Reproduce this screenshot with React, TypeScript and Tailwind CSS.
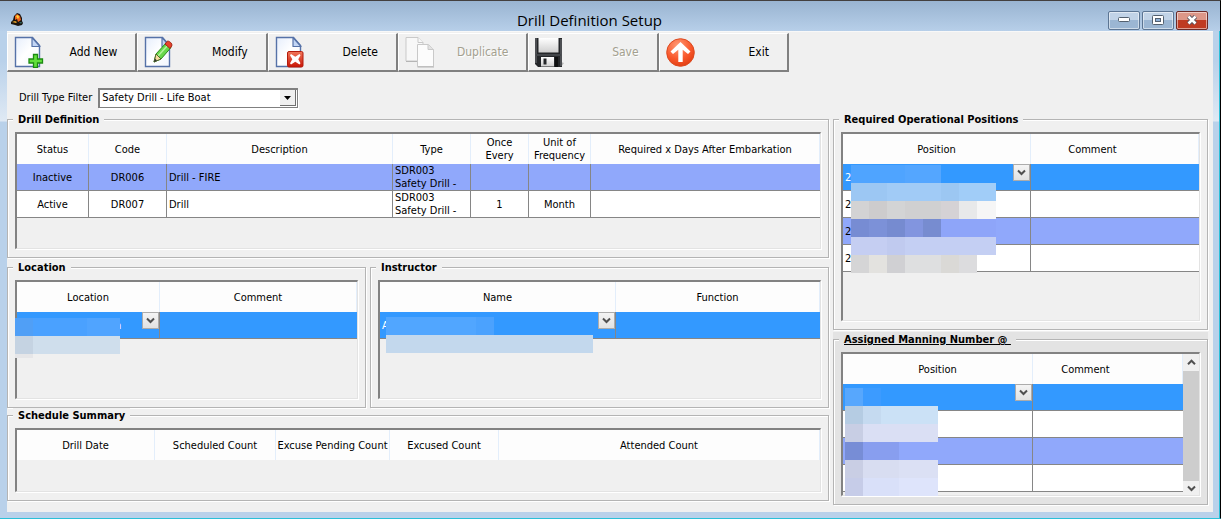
import { useState } from 'react';
import type { ReactNode } from 'react';
import clsx from 'clsx';

interface Column {
  title: string;
  width?: string;
  className?: string;
}

type RowTone = 'selected' | 'alt' | 'plain';

interface Row {
  tone: RowTone;
  cells: ReactNode[];
  align?: string[];
}

const rowTones: Record<RowTone, string> = {
  selected: 'bg-[#3399ff] text-white',
  alt: 'bg-[#90a8fb] text-black',
  plain: 'bg-white text-black',
};

/* ---------- icons ---------- */

function Page() {
  return (
    <>
      <path d="M1.5 1.5h17l7 8v21h-24z" fill="url(#paper)" stroke="#5672a8" strokeWidth="1.4" />
      <path d="M18 1.5l8 9h-8z" fill="#c3d6f5" stroke="#5672a8" strokeWidth="1.2" strokeLinejoin="round" />
    </>
  );
}

function IconDefs() {
  return (
    <svg width="0" height="0" className="absolute" aria-hidden="true">
      <defs>
        <linearGradient id="paper" x1="0" y1="0" x2="1" y2="1">
          <stop offset="0" stopColor="#e6eefc" />
          <stop offset="0.5" stopColor="#ffffff" />
          <stop offset="1" stopColor="#f1f6ff" />
        </linearGradient>
        <linearGradient id="red" x1="0" y1="0" x2="0" y2="1">
          <stop offset="0" stopColor="#f0775a" />
          <stop offset="1" stopColor="#c81405" />
        </linearGradient>
        <radialGradient id="orange" cx="0.4" cy="0.25" r="0.8">
          <stop offset="0" stopColor="#ff9c78" />
          <stop offset="0.6" stopColor="#f9582c" />
          <stop offset="1" stopColor="#e03c10" />
        </radialGradient>
        <linearGradient id="metal" x1="0" y1="0" x2="0" y2="1">
          <stop offset="0" stopColor="#ffffff" />
          <stop offset="1" stopColor="#cfcfcf" />
        </linearGradient>
      </defs>
    </svg>
  );
}

function AddIcon() {
  return (
    <svg width="30" height="32" viewBox="0 0 30 32" aria-hidden="true">
      <Page />
      <path d="M19.500 18.500h4v4.500h5v4h-5v4.500h-4V27H15v-4h4.500z" fill="#62e03c" stroke="#1c8a12" strokeWidth="1.300" />
    </svg>
  );
}

function ModifyIcon() {
  return (
    <svg width="30" height="32" viewBox="0 0 30 32" aria-hidden="true">
      <Page />
      <path d="M10 26l2-8L22 7l5 4.500L17 23z" fill="#67d84b" stroke="#2b8a1c" />
      <path d="M14 20L24 9" stroke="#b4f29c" strokeWidth="1.500" />
      <path d="M10 26l2-8 5 5z" fill="#f6dda0" stroke="#52682a" />
      <path d="M10 26l1-3.500 2 2z" fill="#333" />
      <path d="M21 8l2-2.500c1.500-1.500 6 2 4.700 4.500L26 12.500z" fill="#e5432c" stroke="#a32413" />
    </svg>
  );
}

function DeleteIcon() {
  return (
    <svg width="30" height="32" viewBox="0 0 30 32" aria-hidden="true">
      <Page />
      <rect x="12.500" y="15.500" width="15.500" height="15.500" rx="1.500" fill="url(#red)" stroke="#b31b0c" />
      <path d="M16 18l4.300 2.800L24.500 18l1 1.200-2.200 4 2.200 4-1 1.300-4.200-2.700-4.300 2.700-1-1.300 2.300-4-2.300-4z" fill="#fff" />
    </svg>
  );
}

function DuplicateIcon() {
  return (
    <svg width="30" height="32" viewBox="0 0 30 32" aria-hidden="true">
      <g stroke="#c9c9c9" fill="#f8f8f8" strokeLinejoin="round">
        <path d="M1 1.500h12l5 5V25H1z" />
        <path d="M13 1.500v5h5" />
        <path d="M12.500 8.500h11l5 5v17h-16z" fill="#fcfcfc" />
        <path d="M23 8.500v5h5.500" fill="#e2e2e2" />
      </g>
      <path d="M1 25.500h11M12.500 31h16.500" stroke="#b5b5b5" />
    </svg>
  );
}

function SaveIcon() {
  return (
    <svg width="30" height="32" viewBox="0 0 30 32" aria-hidden="true">
      <path d="M26 26l3 1-3 4z" fill="#b8b8b8" />
      <path d="M0 2h27v29H3l-3-3z" fill="#25272a" />
      <path d="M1 2v25M26 3v27" stroke="#77797c" />
      <path d="M3.500 2h20v14.500h-20z" fill="url(#metal)" />
      <path d="M1 18h25v2H1z" fill="#43464a" />
      <path d="M6 21h13v9.500H6z" fill="url(#metal)" />
      <path d="M8.500 22.500h3v6h-3z" fill="#25272a" />
      <path d="M20 21h3v10h-3z" fill="#0e0f10" />
    </svg>
  );
}

function ExitIcon() {
  return (
    <svg width="30" height="32" viewBox="0 0 30 32" aria-hidden="true">
      <circle cx="14.500" cy="16.500" r="13.800" fill="url(#orange)" stroke="#dc4a20" />
      <path d="M14.500 6l10 9.500-2.500 2.500-5.300-4.200V26h-4.400V13.800L7 18l-2.500-2.500z" fill="#fff" />
    </svg>
  );
}

function AppLogo() {
  return (
    <svg width="13" height="13" viewBox="0 0 13 13" aria-hidden="true">
      <path d="M0 9l2-2 1-4 3-3 3 1 2 4v3l1 2-1 2-4 1-3-1-4-1z" fill="#181410" />
      <path d="M4 3l2-2 3 2 1 4-3 2-1-3-2 1z" fill="#f0641c" />
      <path d="M5 3l2-1 1 2-1 2z" fill="#ffd83a" />
      <path d="M1 9l3-1 2 1-1 1z" fill="#e8a428" />
      <path d="M8 9l3 0-1 2z" fill="#2f5f5a" />
    </svg>
  );
}

function Chevron({ up = false }: { up?: boolean }) {
  return (
    <svg width="9" height="7" viewBox="0 0 9 7" aria-hidden="true">
      <path d={up ? 'M1 5.200l3.500-3.500L8 5.200' : 'M1 1.500L4.500 5 8 1.500'} fill="none" stroke="#505050" strokeWidth="2" />
    </svg>
  );
}

/* ---------- building blocks ---------- */

function ToolButton({ label, icon, disabled }: { label: string; icon: ReactNode; disabled?: boolean }) {
  return (
    <button
      type="button"
      disabled={disabled}
      className={clsx(
        'flex items-center justify-between border-t border-l border-r-2 border-b-2 border-t-white border-l-white border-r-[#808080] border-b-[#808080] bg-[#f0f0f0] pr-[18px] pl-1.5 text-[12px]',
        disabled ? 'text-[#a3a08f] [text-shadow:1px_1px_0_#fff]' : 'text-black',
      )}
    >
      {icon}
      {label}
    </button>
  );
}

function Group({ title, underline, className, children }: { title: string; underline?: boolean; className?: string; children: ReactNode }) {
  return (
    <fieldset
      className={clsx(
        'min-w-0 border border-[#b4b4b4] px-[7px] pt-[6px] pb-2 shadow-[inset_1px_1px_0_#fff,1px_1px_0_#fff]',
        className,
      )}
    >
      <legend
        className={clsx(
          '-ml-0.5 h-[14px] px-[5px] text-[11px] leading-4 font-bold',
          underline ? 'bg-[#e3e3e3] whitespace-pre underline' : 'bg-[#f0f0f0]',
        )}
      >
        {title}
      </legend>
      {children}
    </fieldset>
  );
}

interface GridProps {
  columns: Column[];
  rows: Row[];
  className: string;
  scrollbar?: boolean;
  children?: ReactNode;
}

function Grid({ columns, rows, className, scrollbar, children }: GridProps) {
  return (
    <div
      className={clsx(
        'relative flex items-start border-t-2 border-r border-b border-l-2 border-t-[#828282] border-r-[#e3e3e3] border-b-[#e3e3e3] border-l-[#828282] bg-[#f0f0f0] shadow-[1px_1px_0_#fff]',
        className,
      )}
    >
      <table className="w-full min-w-0 flex-1 table-fixed border-separate border-spacing-0 text-[11px] leading-[13px]">
        <colgroup>
          {columns.map(c => (
            <col key={c.title} className={c.width} />
          ))}
        </colgroup>
        <thead>
          <tr className="h-[30px] bg-[#fdfdfd]">
            {columns.map(c => (
              <th key={c.title} className={clsx('border-r border-[#e3eefb] p-0 text-center font-normal', c.className)}>
                {c.title}
              </th>
            ))}
          </tr>
        </thead>
        <tbody>
          {rows.map((row, i) => (
            <tr key={i} className={clsx('h-[27px]', rowTones[row.tone])}>
              {row.cells.map((cell, j) => (
                <td
                  key={j}
                  className={clsx(
                    'relative border-b border-[#868686] p-0',
                    j < row.cells.length - 1 && 'border-r',
                    row.align?.[j] ?? 'pl-0.5 text-left',
                  )}
                >
                  {cell}
                </td>
              ))}
            </tr>
          ))}
        </tbody>
      </table>
      {scrollbar && (
        <div className="flex w-4 flex-col self-stretch bg-[#f0f0f0]">
          <button type="button" aria-label="Scroll up" className="flex h-[17px] items-center justify-center">
            <Chevron up />
          </button>
          <div className="flex-1 bg-[#cdcdcd]" />
          <button type="button" aria-label="Scroll down" className="flex h-[14px] items-center justify-center">
            <Chevron />
          </button>
        </div>
      )}
      {children}
    </div>
  );
}

function Picker({ text, label, textClass }: { text: string; label: string; textClass?: string }) {
  return (
    <>
      <span className={textClass}>{text}</span>
      <button
        type="button"
        aria-label={label}
        className="absolute top-0 right-0 flex size-[17px] items-center justify-center border border-[#acacac] bg-linear-to-b from-[#f4f4f4] to-[#e2e2e2]"
      >
        <Chevron />
      </button>
    </>
  );
}

// Each strip is one band of masked text, built from coloured tiles
function Mask({ strips, className }: { strips: string[][]; className: string }) {
  return (
    <div className={clsx('absolute', className)} aria-hidden="true">
      {strips.map((tiles, i) => (
        <div key={i} className="flex h-[18px]">
          {tiles.map((tile, j) => (
            <div key={j} className={clsx('h-full', tile)} />
          ))}
        </div>
      ))}
    </div>
  );
}

/* ---------- data ---------- */

const center = 'text-center';
const left = 'pl-0.5 text-left';
const drillAlign = [center, center, left, left, center, center, center];

const drillColumns: Column[] = [
  { title: 'Status', width: 'w-[72px]' },
  { title: 'Code', width: 'w-[78px]' },
  { title: 'Description', width: 'w-[226px]' },
  { title: 'Type', width: 'w-[78px]' },
  { title: 'Once Every', width: 'w-[58px]', className: 'px-2' },
  { title: 'Unit of Frequency', width: 'w-[62px]' },
  { title: 'Required x Days After Embarkation' },
];

const drillType = (
  <>
    SDR003
    <br />
    Safety Drill -
  </>
);

const drillRows: Row[] = [
  { tone: 'alt', cells: ['Inactive', 'DR006', 'Drill - FIRE', drillType, '', '', ''], align: drillAlign },
  { tone: 'plain', cells: ['Active', 'DR007', 'Drill', drillType, '1', 'Month', ''], align: drillAlign },
];

const positionMask = [
  ['w-[54px] bg-[#4fa4ff]', 'w-[36px] bg-[#54a6ff]'],
  ['w-[36px] bg-[#9cc7f3]', 'w-[54px] bg-[#a1cbf6]', 'w-[18px] bg-[#9cc7f2]', 'w-[37px] bg-[#a1cdf8]'],
  ['w-[18px] bg-[#d3d3d4]', 'w-[18px] bg-[#cdcccd]', 'w-[18px] bg-[#d3d4d5]', 'w-[36px] bg-[#d0d0d1]', 'w-[18px] bg-[#d5d2d5]', 'w-[18px] bg-[#e8e9ea]', 'w-[19px] bg-[#f6f6f6]'],
  ['w-[18px] bg-[#778cd3]', 'w-[18px] bg-[#7c91d8]', 'w-[18px] bg-[#768bd0]', 'w-[18px] bg-[#8295df]', 'w-[18px] bg-[#778cd0]', 'w-[55px] bg-[#8ea5f9]'],
  ['w-[36px] bg-[#c5cef2]', 'w-[18px] bg-[#c0caef]', 'w-[91px] bg-[#c4cff3]'],
  ['w-[18px] bg-[#d5d5d6]', 'w-[18px] bg-[#e3e2df]', 'w-[18px] bg-[#d0d0d3]', 'w-[36px] bg-[#dedfe0]', 'w-[18px] bg-[#dad9d6]', 'w-[18px] bg-[#dcdcde]'],
];

const manningMask = [
  ['w-[18px] bg-[#57a7fd]', 'w-[18px] bg-[#3c9bff]'],
  ['w-[18px] bg-[#b5cce3]', 'w-[18px] bg-[#c5daf0]', 'w-[57px] bg-[#cbe1f6]'],
  ['w-[18px] bg-[#c8cee4]', 'w-[75px] bg-[#dadff4]'],
  ['w-[18px] bg-[#778dd6]', 'w-[36px] bg-[#889eef]'],
  ['w-[18px] bg-[#c9cee4]', 'w-[36px] bg-[#d8ddf1]', 'w-[39px] bg-[#dbe0f4]'],
  ['w-[18px] bg-[#c6cce8]', 'w-[36px] bg-[#d9e0f9]', 'w-[39px] bg-[#dee4fb]'],
];

const locationMask = [
  ['w-[18px] bg-[#509ff6]', 'w-[54px] bg-[#4aa1ff]', 'w-[33px] bg-[#50a4ff]'],
  ['w-[18px] bg-[#c5d3e2]', 'w-[87px] bg-[#cfdeec]'],
  ['w-[18px] max-h-1 bg-[#e6e6e8]'],
];

const instructorMask = [
  ['w-[90px] bg-[#51a6ff]', 'w-[18px] bg-[#4ba2fe]'],
  ['w-[207px] bg-[#c3d8ed]'],
];

const windowButton = 'flex h-[19px] w-8 items-center justify-center rounded-[2px] border shadow-[inset_0_0_0_1px_rgba(255,255,255,0.5)]';

export default function App() {
  const [filter, setFilter] = useState('Safety Drill - Life Boat');

  return (
    <div className="flex min-h-screen flex-col border-t border-r border-b border-t-[#43403f] border-r-black border-b-[#2bc0d8] bg-[#b9d1ea] font-['DejaVu_Sans_Condensed','Noto_Sans',sans-serif] text-[11px] text-black">
      <IconDefs />
      <header className="flex h-[30px] items-center bg-linear-to-b from-[#99b4d1] to-[#b7cfe9] pr-3 pl-[11px]">
        <div className="flex-1 pt-1.5">
          <AppLogo />
        </div>
        <h1 className="mr-10 pt-2 font-['Open_Sans',sans-serif] text-[15px] leading-5">Drill Definition Setup</h1>
        <div className="flex flex-1 items-center justify-end gap-0.5 pt-2">
          <button type="button" aria-label="Minimize" className={clsx(windowButton, 'border-[#5c7593] bg-linear-to-b from-[#c1d3e7] from-50% to-[#9bb6d3] to-50%')}>
            <svg width="12" height="6" viewBox="0 0 12 6" aria-hidden="true">
              <rect x="0.500" y="0.500" width="11" height="4" rx="1" fill="#fff" stroke="#53606f" />
            </svg>
          </button>
          <button type="button" aria-label="Maximize" className={clsx(windowButton, 'border-[#5c7593] bg-linear-to-b from-[#c1d3e7] from-50% to-[#9bb6d3] to-50%')}>
            <svg width="12" height="10" viewBox="0 0 12 10" aria-hidden="true">
              <rect x="0.500" y="0.500" width="11" height="9" rx="1" fill="#fff" stroke="#53606f" />
              <rect x="3.500" y="3.500" width="5" height="3" fill="#8fb0d6" stroke="#53606f" />
            </svg>
          </button>
          <button type="button" aria-label="Close" className={clsx(windowButton, 'border-[#6b2a28] bg-linear-to-b from-[#dd9788] from-50% to-[#bf3a22] to-50%')}>
            <svg width="12" height="10" viewBox="0 0 12 10" aria-hidden="true">
              <path d="M2.500 1.500l7 7M9.500 1.500l-7 7" stroke="#5a5560" strokeWidth="4.500" />
              <path d="M2.500 1.500l7 7M9.500 1.500l-7 7" stroke="#fff" strokeWidth="2.500" />
            </svg>
          </button>
        </div>
      </header>

      <div className="flex flex-1 border-r border-[#2bc0d8] bg-linear-to-b from-[#b9d1ea] from-[30px] via-[#dfe9f4] via-[90px] to-[#b9d1ea] to-[91px] pr-1.5 pb-1.5 pl-[7px]">
        <main className="min-w-0 flex-1 border-t border-[#f8f8f8] bg-[#f0f0f0]">
          <div className="grid h-10 max-w-[782px] grid-cols-6 pt-px">
            <ToolButton label="Add New" icon={<AddIcon />} />
            <ToolButton label="Modify" icon={<ModifyIcon />} />
            <ToolButton label="Delete" icon={<DeleteIcon />} />
            <ToolButton label="Duplicate" icon={<DuplicateIcon />} disabled />
            <ToolButton label="Save" icon={<SaveIcon />} disabled />
            <ToolButton label="Exit" icon={<ExitIcon />} />
          </div>

          <div className="mt-4 flex items-center gap-1.5 pl-3">
            <label htmlFor="drill-type">Drill Type Filter</label>
            <div className="relative">
              <select
                id="drill-type"
                value={filter}
                onChange={e => setFilter(e.target.value)}
                className="block h-5 w-[200px] appearance-none border-t-2 border-r border-b border-l-2 border-[#808080] bg-white pl-0.5 text-[11px] shadow-[1px_2px_0_#fff] outline-none"
              >
                <option>Safety Drill - Life Boat</option>
              </select>
              <span className="pointer-events-none absolute top-0.5 right-0.5 flex h-4 w-4 items-center justify-center border-r border-b border-[#707070] bg-[#f0f0f0]">
                <svg width="7" height="4" viewBox="0 0 7 4" aria-hidden="true">
                  <path d="M0 0h7L3.500 4z" fill="#000" />
                </svg>
              </span>
            </div>
          </div>

          <div className="mt-1 flex items-start gap-1 pr-[5px]">
            <div className="flex min-w-0 flex-1 flex-col">
              <Group title="Drill Definition">
                <Grid columns={drillColumns} rows={drillRows} className="min-h-[117px]" />
              </Group>

              <div className="mt-0.5 flex gap-1">
                <Group title="Location" className="w-[359px]">
                  <Grid
                    columns={[{ title: 'Location', width: 'w-[143px]' }, { title: 'Comment' }]}
                    rows={[
                      {
                        tone: 'selected',
                        cells: [<Picker text="n" label="Choose location" textClass="pl-24" />, ''],
                      },
                    ]}
                    className="min-h-[119px]"
                  >
                    <Mask strips={locationMask} className="top-9 -left-0.5" />
                  </Grid>
                </Group>
                <Group title="Instructor" className="flex-1">
                  <Grid
                    columns={[{ title: 'Name', width: 'w-[236px]' }, { title: 'Function' }]}
                    rows={[{ tone: 'selected', cells: [<Picker text="A" label="Choose instructor" />, ''] }]}
                    className="min-h-[119px]"
                  >
                    <Mask strips={instructorMask} className="top-[35px] left-1.5" />
                  </Grid>
                </Group>
              </div>

              <Group title="Schedule Summary">
                <Grid
                  columns={[
                    { title: 'Drill Date', width: 'w-[138px]' },
                    { title: 'Scheduled Count', width: 'w-[121px]' },
                    { title: 'Excuse Pending Count', width: 'w-[114px]' },
                    { title: 'Excused Count', width: 'w-[109px]' },
                    { title: 'Attended Count' },
                  ]}
                  rows={[]}
                  className="min-h-16"
                />
              </Group>
            </div>

            <div className="flex w-[375px] flex-col gap-0.5">
              <Group title="Required Operational Positions">
                <Grid
                  columns={[{ title: 'Position', width: 'w-[188px]' }, { title: 'Comment', className: 'pr-11' }]}
                  rows={[
                    { tone: 'selected', cells: [<Picker text="2" label="Choose position" />, ''] },
                    { tone: 'plain', cells: ['2', ''] },
                    { tone: 'alt', cells: ['2', ''] },
                    { tone: 'plain', cells: ['2', ''] },
                  ]}
                  className="min-h-[189px]"
                >
                  <Mask strips={positionMask} className="top-[31px] left-2" />
                </Grid>
              </Group>

              <div className="bg-[#e3e3e3]">
                <Group title="Assigned Manning Number @ " underline>
                  <Grid
                    columns={[{ title: 'Position', width: 'w-[190px]' }, { title: 'Comment', className: 'pr-11' }]}
                    rows={[
                      { tone: 'selected', cells: [<Picker text="0" label="Choose assigned position" />, ''] },
                      { tone: 'plain', cells: [<span className="text-[#c0506a]">0</span>, ''] },
                      { tone: 'alt', cells: [<span className="text-[#6a3c9c]">0</span>, ''] },
                      { tone: 'plain', cells: [<span className="text-[#c0506a]">0</span>, ''] },
                    ]}
                    className="min-h-[144px]"
                    scrollbar
                  >
                    <Mask strips={manningMask} className="top-[34px] left-0.5" />
                  </Grid>
                </Group>
              </div>
            </div>
          </div>
        </main>
      </div>
    </div>
  );
}
